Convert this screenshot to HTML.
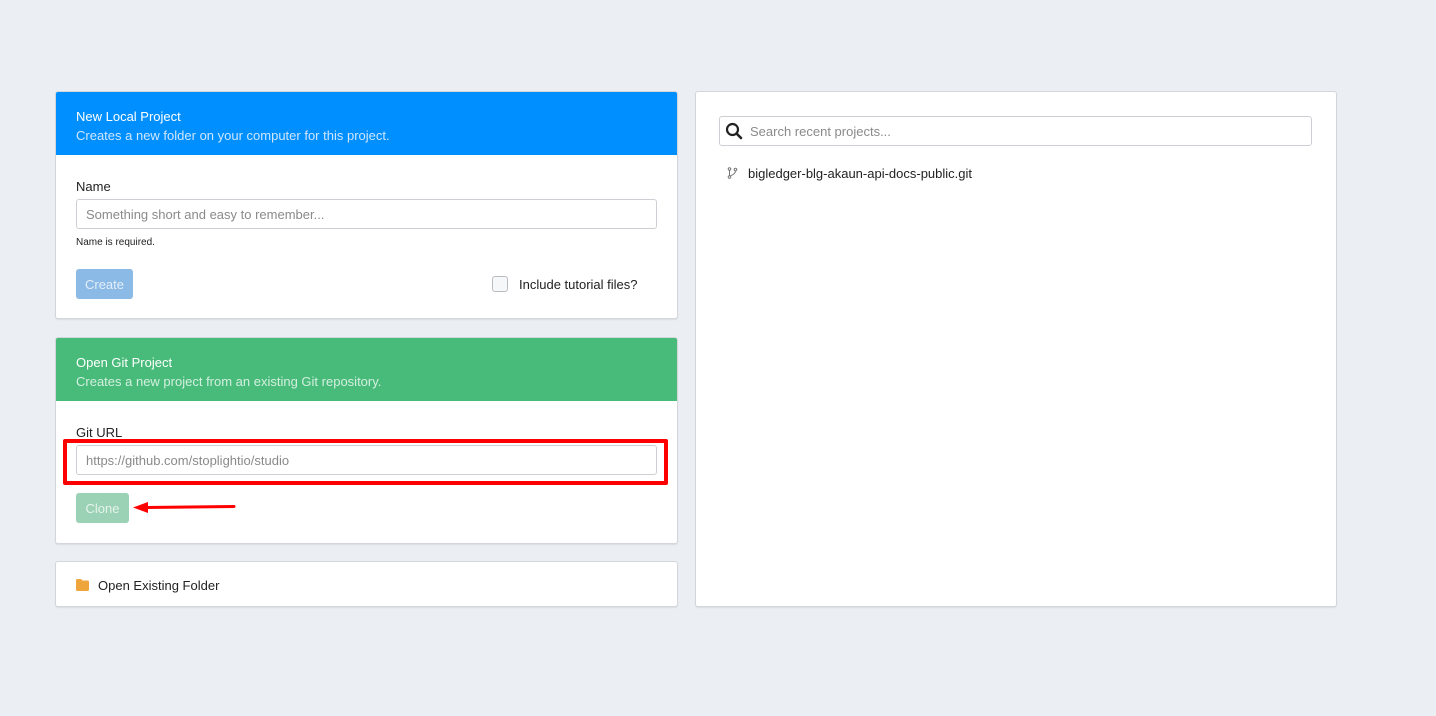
<!DOCTYPE html>
<html><head><style>
body{margin:0;width:1436px;height:716px;background:#ebeff4;font-family:"Liberation Sans",sans-serif;position:relative;overflow:hidden;color:#222}
.card{position:absolute;background:#fff;border:1px solid #d3d7db;border-radius:3px;box-sizing:border-box;box-shadow:0 1px 1px rgba(0,0,0,.08)}
.hd{position:absolute;left:0;right:0;top:0;height:63px;color:#fff;font-size:13px}
.abs{position:absolute;white-space:nowrap}
.inp{position:absolute;border:1px solid #ccd0d4;border-radius:3px;box-sizing:border-box;background:#fff;color:#8a8a8a;font-size:13px;line-height:29px;padding-left:9px}
.btn{position:absolute;border-radius:3px;color:rgba(255,255,255,.75);font-size:13px;text-align:center;line-height:31px}
</style></head><body>

<div class="card" style="left:55px;top:91px;width:623px;height:228px;overflow:hidden">
 <div class="hd" style="background:#008ffe">
  <div class="abs" style="left:20px;top:17px">New Local Project</div>
  <div class="abs" style="left:20px;top:36px;color:#cfe6ff">Creates a new folder on your computer for this project.</div>
 </div>
 <div class="abs" style="left:20px;top:87px;font-size:13px">Name</div>
 <div class="inp" style="left:20px;top:107px;width:581px;height:30px">Something short and easy to remember...</div>
 <div class="abs" style="left:20px;top:145px;font-size:10px">Name is required.</div>
 <div class="btn" style="left:20px;top:177px;width:57px;height:30px;background:#8bbae7">Create</div>
 <div class="abs" style="left:436px;top:184px;width:14px;height:14px;border:1px solid #b8bcc0;border-radius:3px;background:#f5f7f9"></div>
 <div class="abs" style="left:463px;top:185px;font-size:13px">Include tutorial files?</div>
</div>

<div class="card" style="left:55px;top:337px;width:623px;height:207px;overflow:hidden">
 <div class="hd" style="background:#48bb7a">
  <div class="abs" style="left:20px;top:17px">Open Git Project</div>
  <div class="abs" style="left:20px;top:36px;color:#d3efdf">Creates a new project from an existing Git repository.</div>
 </div>
 <div class="abs" style="left:20px;top:87px;font-size:13px">Git URL</div>
 <div class="inp" style="left:20px;top:107px;width:581px;height:30px">https://github.com/stoplightio/studio</div>
 <div class="btn" style="left:20px;top:155px;width:53px;height:30px;background:#9bd1b4">Clone</div>
</div>
<div class="abs" style="left:63px;top:439px;width:597px;height:38px;border:4px solid #f00;border-radius:2px"></div>
<svg class="abs" style="left:130px;top:500px" width="110" height="16"><path d="M16 7.5 L104 6.5" stroke="#f00" stroke-width="3" stroke-linecap="round"/><path d="M3 7.5 L18 2 L18 13 Z" fill="#f00"/></svg>

<div class="card" style="left:55px;top:561px;width:623px;height:46px">
 <svg class="abs" style="left:20px;top:17px" width="13" height="12"><path d="M0 1.5Q0 0 1.5 0H5L6.5 1.5H11.5Q13 1.5 13 3V10.5Q13 12 11.5 12H1.5Q0 12 0 10.5Z" fill="#eea53c"/></svg>
 <div class="abs" style="left:42px;top:16px;font-size:13px">Open Existing Folder</div>
</div>

<div class="card" style="left:695px;top:91px;width:642px;height:516px">
 <div class="inp" style="left:23px;top:24px;width:593px;height:30px;padding-left:30px">Search recent projects...</div>
 <svg class="abs" style="left:29px;top:30px" width="18" height="18"><circle cx="7.5" cy="7.5" r="5.5" fill="none" stroke="#222" stroke-width="2.2"/><path d="M11.5 11.5L16 16" stroke="#222" stroke-width="2.6" stroke-linecap="round"/></svg>
 <svg class="abs" style="left:31px;top:75px" width="12" height="12"><g fill="none" stroke="#777" stroke-width="1"><circle cx="2.5" cy="10" r="1.3"/><circle cx="8.5" cy="2.5" r="1.3"/><circle cx="2.5" cy="2" r="1.3"/><path d="M2.5 3.3V8.7M8.5 3.8Q8.5 7 3.5 8.8"/></g></svg>
 <div class="abs" style="left:52px;top:74px;font-size:13px">bigledger-blg-akaun-api-docs-public.git</div>
</div>
</body></html>
